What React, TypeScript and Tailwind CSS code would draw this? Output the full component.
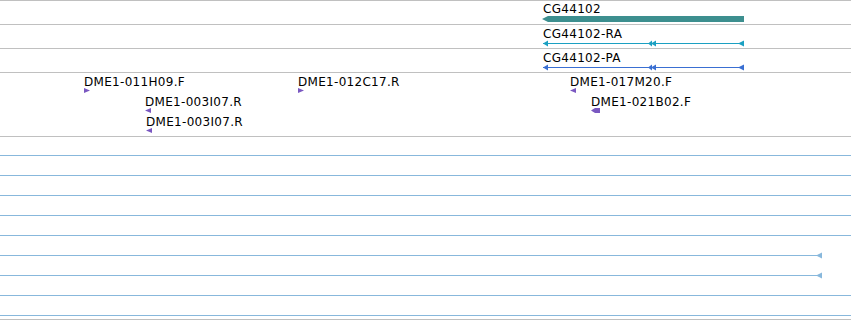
type Dir = "left" | "right";

interface Est {
  name: string;
  x: number;
  lane: number;
  dir: Dir;
  wide?: boolean;
}

const ests: Est[] = [
  { name: "DME1-011H09.F", x: 84, lane: 0, dir: "right" },
  { name: "DME1-003I07.R", x: 145, lane: 1, dir: "left" },
  { name: "DME1-003I07.R", x: 146, lane: 2, dir: "left" },
  { name: "DME1-012C17.R", x: 298, lane: 0, dir: "right" },
  { name: "DME1-017M20.F", x: 570, lane: 0, dir: "left" },
  { name: "DME1-021B02.F", x: 591, lane: 1, dir: "left", wide: true },
];

// lanes of the lower track; end = x where the feature stops (null = runs past the view)
const lowerLanes: (number | null)[] = [null, null, null, null, null, 822, 822, null, null];

function Marker({ dir, wide }: { dir: Dir; wide?: boolean }) {
  const w = wide ? 9 : 6;
  const pts =
    dir === "right"
      ? "0,0 6,2.5 0,5"
      : wide
      ? "0,2.5 4,0 9,0 9,5 4,5"
      : "0,2.5 6,0 6,5";
  return (
    <svg width={w} height={5} className="block -mt-px">
      <polygon points={pts} fill="#7a58c1" />
    </svg>
  );
}

function Transcript({ color }: { color: string }) {
  return (
    <svg width={204} height={7} className="block -mt-px">
      <line x1={1} y1={3.5} x2={202} y2={3.5} stroke={color} strokeWidth={1} />
      <polygon points="1,3.5 6,0.5 6,6.5" fill={color} />
      <polygon points="106,3.5 110,0.5 110,6.5" fill={color} />
      <polygon points="109,3.5 114,0.5 114,6.5" fill={color} />
      <polygon points="196,3.5 202,0.5 202,6.5" fill={color} />
    </svg>
  );
}

function Label({ children }: { children: string }) {
  return (
    <span className="block whitespace-nowrap text-[12px] leading-[14px] tracking-[0.3px] text-black">
      {children}
    </span>
  );
}

function TranscriptTrack({ name, color }: { name: string; color: string }) {
  return (
    <div className="relative h-[24px] shrink-0 border-t border-[#c0c0c0]">
      <div className="absolute left-[542px] top-[2px] flex flex-col">
        <div className="pl-px">
          <Label>{name}</Label>
        </div>
        <Transcript color={color} />
      </div>
    </div>
  );
}

export default function App() {
  return (
    <div
      className="flex flex-col w-[851px] h-[320px] overflow-hidden bg-white"
      style={{ fontFamily: '"DejaVu Sans", Verdana, sans-serif' }}
    >
      {/* gene */}
      <div className="relative h-[24px] shrink-0 border-t border-[#c0c0c0]">
        <div className="absolute left-[541px] top-[1px] flex flex-col">
          <div className="pl-[2px]">
            <Label>CG44102</Label>
          </div>
          <svg width={204} height={7} className="block">
            <polygon points="1,3 7,0 203,0 203,6 7,6" fill="#3d8f8f" />
          </svg>
        </div>
      </div>

      <TranscriptTrack name="CG44102-RA" color="#1ba0c2" />
      <TranscriptTrack name="CG44102-PA" color="#3a6fd2" />

      {/* ESTs */}
      <div className="relative h-[64px] shrink-0 border-t border-[#c0c0c0]">
        {ests.map((e, i) => (
          <div
            key={i}
            className="absolute flex flex-col items-start"
            style={{ left: e.x, top: 2 + e.lane * 20 }}
          >
            <Label>{e.name}</Label>
            <Marker dir={e.dir} wide={e.wide} />
          </div>
        ))}
      </div>

      {/* lower track */}
      <div className="flex flex-col h-[183px] shrink-0 border-t border-[#c0c0c0]">
        {lowerLanes.map((end, i) => (
          <div key={i} className="flex items-end h-[20px] pb-[1px]">
            {end === null ? (
              <div className="w-full h-px bg-[#88b8dc]" />
            ) : (
              <svg width={end + 1} height={7} className="block -mb-[3px]">
                <line x1={0} y1={3.5} x2={end} y2={3.5} stroke="#88b8dc" strokeWidth={1} />
                <polygon points={`${end - 6},3.5 ${end},0.5 ${end},6.5`} fill="#88b8dc" />
              </svg>
            )}
          </div>
        ))}
      </div>
      <div className="h-px shrink-0 border-t border-[#c0c0c0]" />
    </div>
  );
}
